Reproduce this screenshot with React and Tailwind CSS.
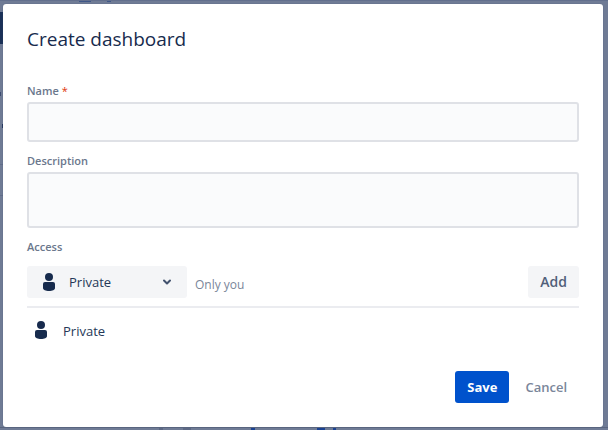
import { useState } from 'react';

const PersonIcon = () => (
  <svg viewBox="0 0 12 18" fill="currentColor" aria-hidden="true" className="w-3 h-[18px] shrink-0 text-[#172b4d]">
    <circle cx="6" cy="4" r="4" />
    <path d="M2 9h8a2 2 0 0 1 2 2v4c0 2-2.600 3-6 3s-6-1-6-3v-4a2 2 0 0 1 2-2z" />
  </svg>
);

const ChevronIcon = () => (
  <svg viewBox="0 0 8 6" fill="none" stroke="#42526e" strokeWidth="2" strokeLinecap="round" strokeLinejoin="round" aria-hidden="true" className="w-2 h-1.5">
    <path d="M1 1.500l3 3 3-3" />
  </svg>
);

const FieldLabel = ({ htmlFor, required, children }) => (
  <label htmlFor={htmlFor} className="flex gap-[3px] pb-[3px] text-[11px] leading-4 font-semibold text-[#6b778c]">
    {children}
    {required && <span className="text-[11px] leading-4 font-normal text-[#de350b]">*</span>}
  </label>
);

// Slices of the dimmed page that show round the edges of the dialog
const TopEdge = () => (
  <div aria-hidden="true" className="h-1 shrink-0 border-t border-[#626f8d]">
    <div className="flex gap-4 h-px pl-[79px]">
      <div className="w-3 bg-[#3f5788]" />
      <div className="w-1 bg-[#3f5788]" />
    </div>
  </div>
);

const LeftEdge = () => (
  <div aria-hidden="true" className="w-[3px] shrink-0 flex flex-col pt-2">
    <div className="h-8 bg-[#1a3057]" />
    <div className="h-12" />
    <div className="h-1 w-px bg-[#3d4b70]" />
    <div className="h-7" />
    <div className="h-1 w-px ml-auto bg-[#24365e]" />
    <div className="mt-9 h-8 border-y border-[#616d8a]" />
  </div>
);

const BottomEdge = () => (
  <div aria-hidden="true" className="h-[3px] shrink-0 flex gap-5 pl-[159px] border-t border-[#59657f]">
    <div className="w-1 bg-[#5d6985]" />
    <div className="w-2 bg-[#5d6985]" />
    <div className="w-5" />
    <div className="w-1 bg-[#1b4292]" />
    <div className="w-[22px]" />
    <div className="w-2 bg-[#1b4292]" />
    <div className="-ml-3 w-[3px] bg-[#1b4292]" />
  </div>
);

const CreateDashboardForm = () => {
  const [name, setName] = useState('');
  const [description, setDescription] = useState('');
  const [access, setAccess] = useState('private');

  return (
    <form
      role="dialog"
      aria-labelledby="dialog-title"
      onSubmit={(e) => e.preventDefault()}
      className="grow flex flex-col rounded-[3px] bg-white p-6 shadow-[0_0_1px_#42526e]"
    >
      <h1 id="dialog-title" className="text-[19px] leading-[22px] font-medium">Create dashboard</h1>

      <div className="pt-[33px]">
        <FieldLabel htmlFor="name" required>Name</FieldLabel>
        <input
          id="name"
          type="text"
          required
          value={name}
          onChange={(e) => setName(e.target.value)}
          className="block w-full h-10 px-2 rounded-[3px] border-2 border-[#dfe1e6] bg-[#fafbfc] text-sm"
        />
      </div>

      <div className="pt-[11px]">
        <FieldLabel htmlFor="description">Description</FieldLabel>
        <textarea
          id="description"
          value={description}
          onChange={(e) => setDescription(e.target.value)}
          className="block w-full h-14 px-2 py-1 resize-none rounded-[3px] border-2 border-[#dfe1e6] bg-[#fafbfc] text-sm"
        />
      </div>

      <div className="pt-[11px]">
        <FieldLabel htmlFor="access">Access</FieldLabel>
        <div className="flex items-center gap-2 py-2 border-b-2 border-[#ebecf0]">
          <div className="grid w-40 items-center">
            <select
              id="access"
              value={access}
              onChange={(e) => setAccess(e.target.value)}
              className="col-start-1 row-start-1 w-full h-8 pt-0.5 pl-[42px] pr-8 appearance-none rounded-[3px] bg-[#f4f5f7] text-[13px] text-[#253858]"
            >
              <option value="private">Private</option>
              <option value="public">Public</option>
            </select>
            <div className="col-start-1 row-start-1 flex items-center justify-between px-4 pointer-events-none">
              <PersonIcon />
              <ChevronIcon />
            </div>
          </div>
          <span className="pt-1.5 text-xs text-[#7a869a]">Only you</span>
          <button type="button" className="ml-auto h-8 px-3 rounded-[3px] bg-[#f4f5f7] text-sm font-semibold text-[#505f79]">
            Add
          </button>
        </div>
      </div>

      <ul className="pt-[13px]">
        <li className="flex gap-4 px-2 text-[13px] leading-5 text-[#253858]">
          <PersonIcon />
          Private
        </li>
      </ul>

      <div className="flex justify-end gap-1 pt-[30px]">
        <button type="submit" className="h-8 px-3 pt-0.5 rounded-[3px] bg-[#0052cc] text-[13px] font-bold text-white">
          Save
        </button>
        <button type="button" className="h-8 px-3 pt-0.5 rounded-[3px] text-[13px] font-semibold text-[#7a869a]">
          Cancel
        </button>
      </div>
    </form>
  );
};

const App = () => (
  <div className="min-h-screen flex flex-col bg-[#6f7b95] font-['Open_Sans','Noto_Sans',sans-serif] text-[#172b4d]">
    <TopEdge />
    <div className="grow flex pr-[5px]">
      <LeftEdge />
      <CreateDashboardForm />
    </div>
    <BottomEdge />
  </div>
);

export default App;
